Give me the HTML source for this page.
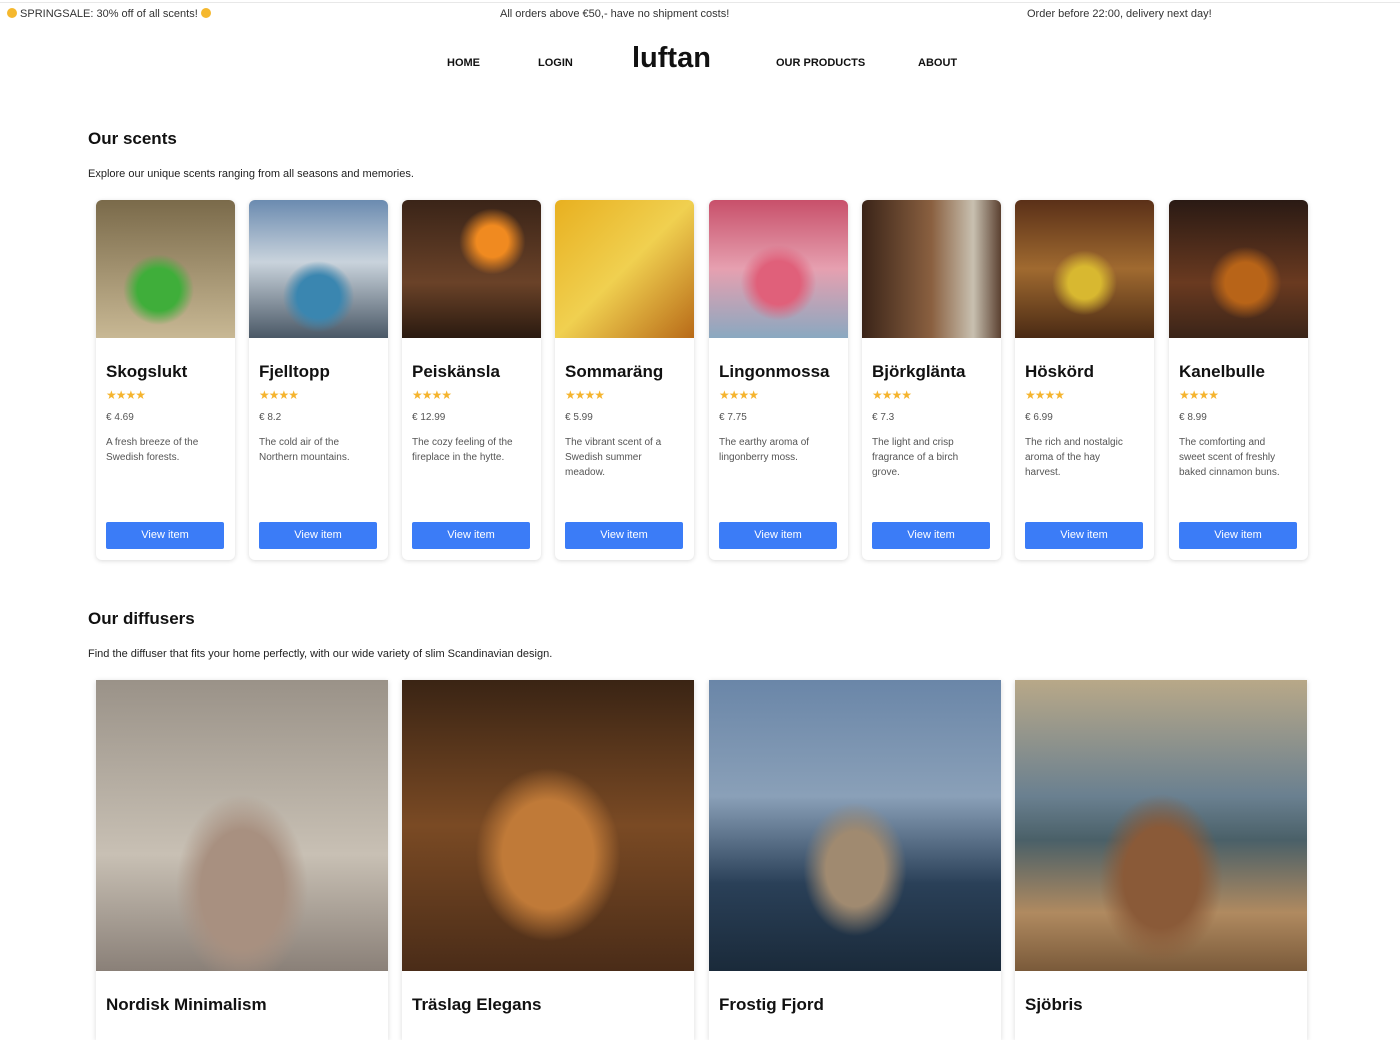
<!DOCTYPE html>
<html><head><meta charset="utf-8"><style>
*{box-sizing:border-box;margin:0;padding:0}
body{width:1400px;height:1014px;overflow:hidden;background:#fff;font-family:"Liberation Sans",sans-serif;color:#111;position:relative}
.top{position:absolute;top:2px;left:0;right:0;height:1px;background:#e8e8e8}
.bar{position:absolute;top:8px;font-size:11px;color:#333}
.sun{display:inline-block;width:10px;height:10px;border-radius:50%;background:#f5b82e;vertical-align:-1px}
.nav{position:absolute;top:57px;font-size:11px;font-weight:bold}
.logo{position:absolute;left:632px;top:42px;font-size:29px;font-weight:bold;letter-spacing:0}
h2{position:absolute;left:88px;font-size:17px;font-weight:bold}
.sub{position:absolute;left:88px;font-size:11px;color:#222}
.card{position:absolute;top:200px;width:139px;height:360px;background:#fff;border-radius:6px;box-shadow:0 1px 5px rgba(0,0,0,.15);overflow:hidden}
.card .img{height:138px}
.card h3{position:absolute;left:10px;top:162px;font-size:17px;font-weight:bold}
.st{position:absolute;left:10px;top:188px;color:#f5b42e;font-size:12px;letter-spacing:-1px}
.pr{position:absolute;left:10px;top:412px;font-size:10px;color:#555}
.card .pr{top:212px}
.ds{position:absolute;left:10px;top:235px;width:104px;font-size:10px;line-height:15px;color:#555}
.btn{position:absolute;left:10px;top:322px;width:118px;height:27px;background:#3b7cf7;color:#fff;font-size:11px;text-align:center;line-height:27px;border-radius:2px}
.dc{position:absolute;top:680px;width:292px;height:360px;background:#fff;box-shadow:0 1px 5px rgba(0,0,0,.15);overflow:hidden}
.dc .img{height:291px}
.dc h3{position:absolute;left:10px;top:315px;font-size:17px;font-weight:bold}
</style></head><body>
<div class="top"></div>
<div class="bar" style="left:7px"><span class="sun"></span> SPRINGSALE: 30% off of all scents! <span class="sun"></span></div>
<div class="bar" style="left:500px">All orders above €50,- have no shipment costs!</div>
<div class="bar" style="left:1027px">Order before 22:00, delivery next day!</div>
<div class="nav" style="left:447px">HOME</div>
<div class="nav" style="left:538px">LOGIN</div>
<div class="logo">luftan</div>
<div class="nav" style="left:776px">OUR PRODUCTS</div>
<div class="nav" style="left:918px">ABOUT</div>
<h2 style="top:129px">Our scents</h2>
<div class="sub" style="top:168px">Explore our unique scents ranging from all seasons and memories.</div>

<div class="card" style="left:96px"><div class="img" style="background:radial-gradient(circle at 45% 65%,#3fae3a 0 18%,transparent 30%),linear-gradient(#7a6a4a,#c8b894)"></div><h3>Skogslukt</h3><div class="st">★★★★</div><div class="pr">€ 4.69</div><div class="ds">A fresh breeze of the Swedish forests.</div><div class="btn">View item</div></div>
<div class="card" style="left:249px"><div class="img" style="background:radial-gradient(circle at 50% 70%,#3a86b0 0 18%,transparent 30%),linear-gradient(#6b8bb0,#c9d3dc 45%,#4a5866)"></div><h3>Fjelltopp</h3><div class="st">★★★★</div><div class="pr">€ 8.2</div><div class="ds">The cold air of the Northern mountains.</div><div class="btn">View item</div></div>
<div class="card" style="left:402px"><div class="img" style="background:radial-gradient(circle at 65% 30%,#f08a20 0 12%,transparent 25%),linear-gradient(#3a2418,#6a4228 60%,#2a1a10)"></div><h3>Peiskänsla</h3><div class="st">★★★★</div><div class="pr">€ 12.99</div><div class="ds">The cozy feeling of the fireplace in the hytte.</div><div class="btn">View item</div></div>
<div class="card" style="left:555px"><div class="img" style="background:linear-gradient(135deg,#e8b020,#f0d050 50%,#b86a18)"></div><h3>Sommaräng</h3><div class="st">★★★★</div><div class="pr">€ 5.99</div><div class="ds">The vibrant scent of a Swedish summer meadow.</div><div class="btn">View item</div></div>
<div class="card" style="left:709px"><div class="img" style="background:radial-gradient(circle at 50% 60%,#e0607a 0 20%,transparent 35%),linear-gradient(#c8506a,#e6a0b0 50%,#8aa8c0)"></div><h3>Lingonmossa</h3><div class="st">★★★★</div><div class="pr">€ 7.75</div><div class="ds">The earthy aroma of lingonberry moss.</div><div class="btn">View item</div></div>
<div class="card" style="left:862px"><div class="img" style="background:linear-gradient(90deg,#3a2418,#8a6040 50%,#c8c0b0 80%,#5a4030)"></div><h3>Björkglänta</h3><div class="st">★★★★</div><div class="pr">€ 7.3</div><div class="ds">The light and crisp fragrance of a birch grove.</div><div class="btn">View item</div></div>
<div class="card" style="left:1015px"><div class="img" style="background:radial-gradient(circle at 50% 60%,#d8b830 0 15%,transparent 30%),linear-gradient(#5a3018,#a06a30 50%,#4a2a14)"></div><h3>Höskörd</h3><div class="st">★★★★</div><div class="pr">€ 6.99</div><div class="ds">The rich and nostalgic aroma of the hay harvest.</div><div class="btn">View item</div></div>
<div class="card" style="left:1169px"><div class="img" style="background:radial-gradient(circle at 55% 60%,#b86418 0 18%,transparent 32%),linear-gradient(#2a1a14,#6a3a20 60%,#3a2418)"></div><h3>Kanelbulle</h3><div class="st">★★★★</div><div class="pr">€ 8.99</div><div class="ds">The comforting and sweet scent of freshly baked cinnamon buns.</div><div class="btn">View item</div></div>

<h2 style="top:609px">Our diffusers</h2>
<div class="sub" style="top:648px">Find the diffuser that fits your home perfectly, with our wide variety of slim Scandinavian design.</div>
<div class="dc" style="left:96px"><div class="img" style="background:radial-gradient(ellipse at 50% 72%,#a89080 0 20%,transparent 32%),linear-gradient(#9a9288,#c8c0b4 60%,#8a8078)"></div><h3>Nordisk Minimalism</h3></div>
<div class="dc" style="left:402px"><div class="img" style="background:radial-gradient(ellipse at 50% 60%,#c07a38 0 22%,transparent 35%),linear-gradient(#3a2414,#7a4a24 50%,#4a2c18)"></div><h3>Träslag Elegans</h3></div>
<div class="dc" style="left:709px"><div class="img" style="background:radial-gradient(ellipse at 50% 65%,#a08a70 0 14%,transparent 25%),linear-gradient(#6a86a8,#8aa0b8 40%,#2a4058 70%,#1a2a3a)"></div><h3>Frostig Fjord</h3></div>
<div class="dc" style="left:1015px"><div class="img" style="background:radial-gradient(ellipse at 50% 68%,#8a5a38 0 18%,transparent 30%),linear-gradient(#b8a888,#6a8090 40%,#4a6068 55%,#b08a60 80%,#7a5a3a)"></div><h3>Sjöbris</h3></div>
</body></html>
